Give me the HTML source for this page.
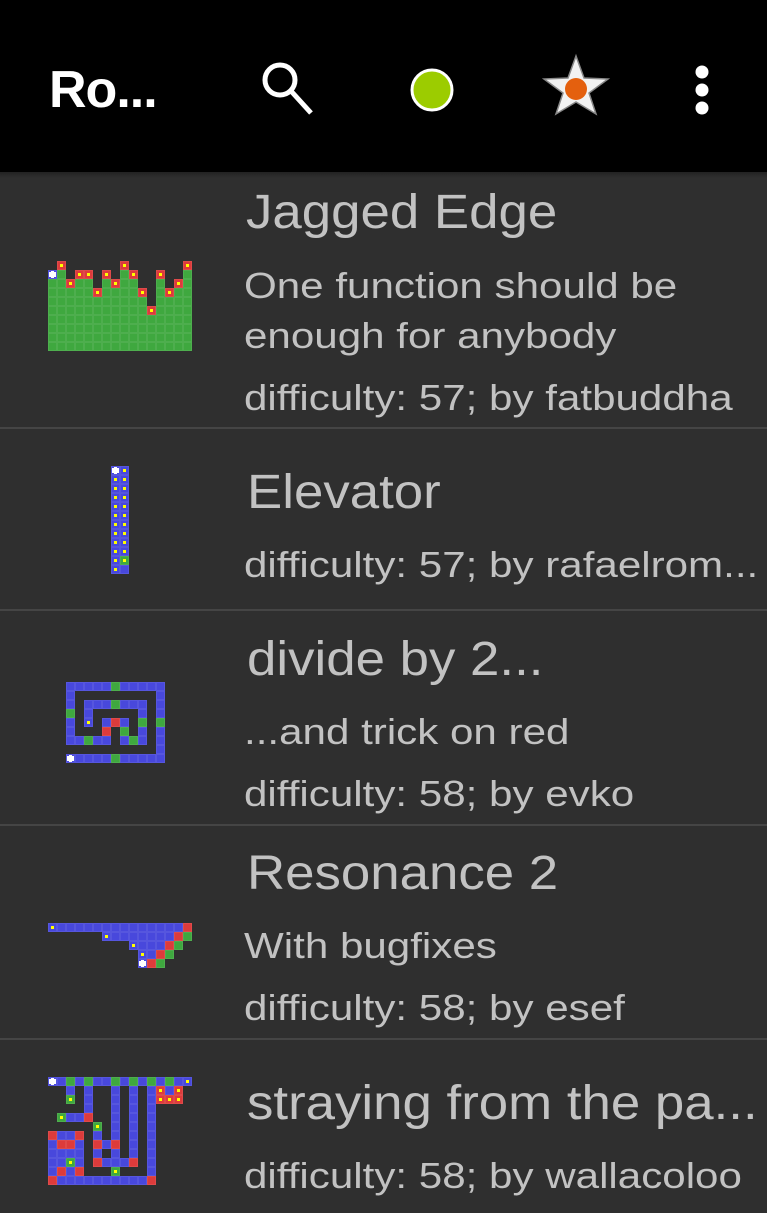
<!DOCTYPE html>
<html><head><meta charset="utf-8"><style>
html,body{margin:0;padding:0}
body{width:767px;height:1213px;background:#2f2f2f;position:relative;overflow:hidden;font-family:"Liberation Sans",sans-serif}
.hdr{position:absolute;left:0;top:0;width:767px;height:172px;background:#000}
.t{position:absolute;color:#c2c2c2;white-space:nowrap;transform-origin:0 50%}
.ti{font-size:48px;transform:scaleX(1.1)}
.su{font-size:36px;transform:scaleX(1.17)}
.sep{position:absolute;left:0;width:767px;height:2px;background:#454545}
svg.g{position:absolute}
</style></head><body>
<div class="hdr">
<div style="position:absolute;left:49px;top:60px;color:#fff;font-size:52px;font-weight:bold;letter-spacing:-1px">Ro...</div>
<svg style="position:absolute;left:258px;top:58px" width="60" height="60"><circle cx="22" cy="22" r="15" fill="none" stroke="#fff" stroke-width="5"/><line x1="33" y1="33" x2="53" y2="55" stroke="#fff" stroke-width="5"/></svg>
<svg style="position:absolute;left:408px;top:66px" width="48" height="48"><circle cx="24" cy="24" r="20" fill="#9ccc00" stroke="#fff" stroke-width="3"/></svg>
<svg style="position:absolute;left:540px;top:52px" width="72" height="64"><polygon points="36,4 44,26 68,27 49,41 56,62 36,50 16,62 23,41 4,27 28,26" fill="#f2f2f2" stroke="#888" stroke-width="1.5"/><circle cx="36" cy="37" r="11" fill="#e4600e"/></svg>
<svg style="position:absolute;left:690px;top:62px" width="24" height="56"><circle cx="12" cy="10" r="6.5" fill="#fff"/><circle cx="12" cy="28" r="6.5" fill="#fff"/><circle cx="12" cy="46" r="6.5" fill="#fff"/></svg>
</div>
<div style="position:absolute;left:0;top:172px;width:767px;height:6px;background:linear-gradient(#222,#2f2f2f)"></div>

<div class="t ti" style="left:246px;top:185px">Jagged Edge</div>
<div class="t su" style="left:244px;top:265px">One function should be</div>
<div class="t su" style="left:244px;top:315px">enough for anybody</div>
<div class="t su" style="left:244px;top:377px">difficulty: 57; by fatbuddha</div>
<div class="sep" style="top:427px"></div>

<div class="t ti" style="left:247px;top:465px">Elevator</div>
<div class="t su" style="left:244px;top:544px">difficulty: 57; by rafaelrom...</div>
<div class="sep" style="top:609px"></div>

<div class="t ti" style="left:247px;top:632px">divide by 2...</div>
<div class="t su" style="left:244px;top:711px">...and trick on red</div>
<div class="t su" style="left:244px;top:773px">difficulty: 58; by evko</div>
<div class="sep" style="top:824px"></div>

<div class="t ti" style="left:247px;top:846px">Resonance 2</div>
<div class="t su" style="left:244px;top:925px">With bugfixes</div>
<div class="t su" style="left:244px;top:987px">difficulty: 58; by esef</div>
<div class="sep" style="top:1038px"></div>

<div class="t ti" style="left:247px;top:1076px">straying from the pa...</div>
<div class="t su" style="left:244px;top:1155px">difficulty: 58; by wallacoloo</div>

<div id="grids"></div>
<script>
var C={B:'#4848dc',G:'#3fa83f',R:'#dd3b3b'};
function draw(x,y,rows){
  var w=rows[0].length*9,h=rows.length*9;
  var s='<svg class="g" style="left:'+x+'px;top:'+y+'px" width="'+w+'" height="'+h+'">';
  rows.forEach(function(r,i){for(var j=0;j<r.length;j++){var c=r[j];if(c=='.')continue;
    var col=c=='S'||c=='y'?C.B:c=='g'?C.G:c=='r'?C.R:C[c];
    s+='<rect x="'+(j*9)+'" y="'+(i*9)+'" width="9" height="9" fill="'+col+'"/><rect x="'+(j*9+.5)+'" y="'+(i*9+.5)+'" width="8" height="8" fill="none" stroke="rgba(255,255,255,.08)"/>';
    if(c=='y'||c=='g'||c=='r')s+='<rect x="'+(j*9+3)+'" y="'+(i*9+3)+'" width="3" height="3" fill="#ff0"/>';
    if(c=='S')s+='<rect x="'+(j*9+1)+'" y="'+(i*9+2)+'" width="7" height="5" fill="#fff"/><rect x="'+(j*9+3)+'" y="'+(i*9+1)+'" width="3" height="7" fill="#fff"/>';
  }});
  return s+'</svg>';
}
var tops=[1,0,2,1,1,3,1,2,0,1,3,5,1,3,2,0];var jr=[];
for(var i=0;i<10;i++){var r='';for(var j=0;j<16;j++){r+= i<tops[j]?'.':(i==tops[j]?(j==0?'S':'r'):'G');}jr.push(r);}
var out='';
out+=draw(48,261,jr);
var el=['Sy','yy','yy','yy','yy','yy','yy','yy','yy','yy','yg','yB'];
out+=draw(111,466,el);
out+=draw(66,682,[
'BBBBBGBBBBB',
'B.........B',
'B.BBBGBBB.B',
'G.B.....B.B',
'B.y.BRB.G.G',
'B...R.G.B.B',
'BBGBB.BGB.B',
'..........B',
'SBBBBGBBBBB']);
out+=draw(48,923,[
'yBBBBBBBBBBBBBBR',
'......yBBBBBBBRG',
'.........yBBBRG.',
'..........yBRG..',
'..........SRG...']);
out+=draw(48,1077,[
'SBGBGBBGBGBGBGBy',
'..B.B..B.B.BrBr.',
'..g.B..B.B.Brrr.',
'....B..B.B.B....',
'.gBBR..B.B.B....',
'.....g.B.B.B....',
'RBBR.B.B.B.B....',
'BRRB.RBR.B.B....',
'BBBB.B.B.B.B....',
'BBgB.RBBBR.B....',
'BRBR...g...B....',
'RBBBBBBBBBBR....']);
document.getElementById('grids').innerHTML=out;
</script>
</body></html>
